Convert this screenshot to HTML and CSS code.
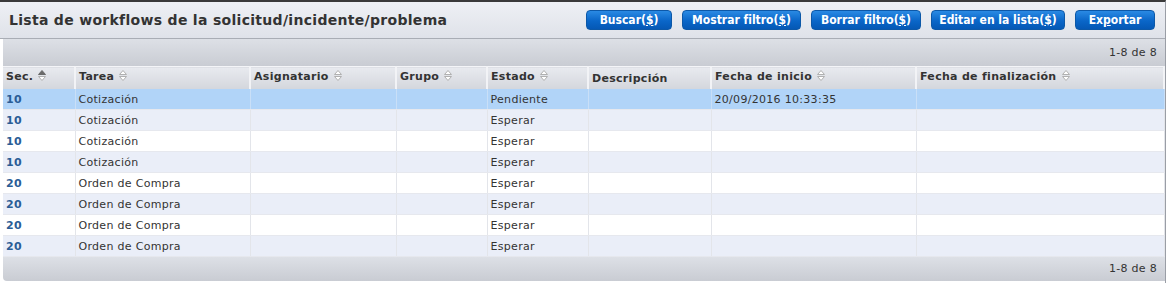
FILE: index.html
```html
<!DOCTYPE html>
<html lang="es">
<head>
    <meta charset="UTF-8">
    <title>Lista de workflows</title>
    <link rel="stylesheet" href="styles.css">
</head>
<body>
    <div class="panel">
        <div class="panel-head">
            <h1 class="title">Lista de workflows de la solicitud/incidente/problema</h1>
            <div class="actions">
                <button class="btn btn-search">Buscar(<u>$</u>)</button>
                <button class="btn btn-show">Mostrar filtro(<u>$</u>)</button>
                <button class="btn btn-clear">Borrar filtro(<u>$</u>)</button>
                <button class="btn btn-edit">Editar en la lista(<u>$</u>)</button>
                <button class="btn btn-export">Ex<u>p</u>ortar</button>
            </div>
        </div>

        <div class="pager">1-8 de 8</div>

        <table class="grid">
            <colgroup>
                <col class="c-seq">
                <col class="c-task">
                <col class="c-user">
                <col class="c-group">
                <col class="c-state">
                <col class="c-desc">
                <col class="c-start">
                <col>
            </colgroup>
            <thead>
                <tr>
                    <th>Sec. <svg class="sort" width="10" height="13" viewBox="0 0 10 13"><path d="M5 1.5 L8.5 5.5 L1.5 5.5 Z" fill="#6a6a6a" stroke="#6a6a6a"/><path d="M1.5 7.5 L8.5 7.5 L5 11.5 Z" fill="#fff" stroke="#b0b0b0"/></svg></th>
                    <th>Tarea <svg class="sort" width="10" height="13" viewBox="0 0 10 13"><path d="M5 1.5 L8.5 5.5 L1.5 5.5 Z" fill="#fff" stroke="#b0b0b0"/><path d="M1.5 7.5 L8.5 7.5 L5 11.5 Z" fill="#fff" stroke="#b0b0b0"/></svg></th>
                    <th>Asignatario <svg class="sort" width="10" height="13" viewBox="0 0 10 13"><path d="M5 1.5 L8.5 5.5 L1.5 5.5 Z" fill="#fff" stroke="#b0b0b0"/><path d="M1.5 7.5 L8.5 7.5 L5 11.5 Z" fill="#fff" stroke="#b0b0b0"/></svg></th>
                    <th>Grupo <svg class="sort" width="10" height="13" viewBox="0 0 10 13"><path d="M5 1.5 L8.5 5.5 L1.5 5.5 Z" fill="#fff" stroke="#b0b0b0"/><path d="M1.5 7.5 L8.5 7.5 L5 11.5 Z" fill="#fff" stroke="#b0b0b0"/></svg></th>
                    <th>Estado <svg class="sort" width="10" height="13" viewBox="0 0 10 13"><path d="M5 1.5 L8.5 5.5 L1.5 5.5 Z" fill="#fff" stroke="#b0b0b0"/><path d="M1.5 7.5 L8.5 7.5 L5 11.5 Z" fill="#fff" stroke="#b0b0b0"/></svg></th>
                    <th class="low">Descripción</th>
                    <th>Fecha de inicio <svg class="sort" width="10" height="13" viewBox="0 0 10 13"><path d="M5 1.5 L8.5 5.5 L1.5 5.5 Z" fill="#fff" stroke="#b0b0b0"/><path d="M1.5 7.5 L8.5 7.5 L5 11.5 Z" fill="#fff" stroke="#b0b0b0"/></svg></th>
                    <th>Fecha de finalización <svg class="sort" width="10" height="13" viewBox="0 0 10 13"><path d="M5 1.5 L8.5 5.5 L1.5 5.5 Z" fill="#fff" stroke="#b0b0b0"/><path d="M1.5 7.5 L8.5 7.5 L5 11.5 Z" fill="#fff" stroke="#b0b0b0"/></svg></th>
                </tr>
            </thead>
            <tbody>
                <tr class="selected"><td class="seq">10</td><td>Cotización</td><td></td><td></td><td>Pendiente</td><td></td><td>20/09/2016 10:33:35</td><td></td></tr>
                <tr class="alt"><td class="seq">10</td><td>Cotización</td><td></td><td></td><td>Esperar</td><td></td><td></td><td></td></tr>
                <tr><td class="seq">10</td><td>Cotización</td><td></td><td></td><td>Esperar</td><td></td><td></td><td></td></tr>
                <tr class="alt"><td class="seq">10</td><td>Cotización</td><td></td><td></td><td>Esperar</td><td></td><td></td><td></td></tr>
                <tr><td class="seq">20</td><td>Orden de Compra</td><td></td><td></td><td>Esperar</td><td></td><td></td><td></td></tr>
                <tr class="alt"><td class="seq">20</td><td>Orden de Compra</td><td></td><td></td><td>Esperar</td><td></td><td></td><td></td></tr>
                <tr><td class="seq">20</td><td>Orden de Compra</td><td></td><td></td><td>Esperar</td><td></td><td></td><td></td></tr>
                <tr class="alt"><td class="seq">20</td><td>Orden de Compra</td><td></td><td></td><td>Esperar</td><td></td><td></td><td></td></tr>
            </tbody>
        </table>

        <div class="pager pager-bottom">1-8 de 8</div>
    </div>
</body>
</html>
```

FILE: styles.css
```css
/* General */
body {
    margin: 0;
    padding: 0;
    background-color: #ffffff;
    font-family: "DejaVu Sans", Verdana, sans-serif;
    font-size: 11px;
    color: #333;
}

.panel {
    width: 1166px;
    height: 283px;
    border-top: 2px solid #3a3a3a;
    border-right: 1px solid #9a9ea6;
    box-sizing: border-box;
}

/* Header */
.panel-head {
    display: flex;
    align-items: center;
    justify-content: space-between;
    height: 36px;
    padding: 0 9px;
    background: linear-gradient(#eef0f5, #dfe2e9);
    border-bottom: 1px solid #a9adb5;
}

.title {
    margin: 0;
    font-size: 14px;
    font-weight: bold;
    color: #333;
    letter-spacing: 0.3px;
}

.actions {
    display: flex;
    gap: 10px;
    padding-right: 1px;
}

.btn {
    height: 20px;
    padding: 0;
    border: 1px solid #0c58a8;
    border-radius: 4px;
    background: linear-gradient(#2a8ae4, #0a66c8 55%, #0558b5);
    color: #ffffff;
    font-family: "DejaVu Sans Condensed", "DejaVu Sans", sans-serif;
    font-size: 12px;
    font-weight: bold;
    line-height: 18px;
    white-space: nowrap;
    cursor: pointer;
}

.btn-search { width: 86px; }
.btn-show { width: 119px; }
.btn-clear { width: 110px; }
.btn-edit { width: 134px; }
.btn-export { width: 80px; }

/* Pager bars */
.pager {
    height: 27px;
    margin-left: 3px;
    padding-right: 8px;
    line-height: 27px;
    text-align: right;
    background: linear-gradient(#dde0e6, #c9ccd3);
    color: #333;
    letter-spacing: 0.3px;
}

.pager-bottom {
    height: 24px;
    line-height: 24px;
    border-bottom-left-radius: 4px;
}

/* Grid */
.grid {
    width: 1162px;
    margin-left: 3px;
    border-collapse: collapse;
    table-layout: fixed;
    border-top: 1px solid #f4f5f8;
    letter-spacing: 0.3px;
}

.c-seq { width: 72px; }
.c-task { width: 175px; }
.c-user { width: 146px; }
.c-group { width: 91px; }
.c-state { width: 101px; }
.c-desc { width: 123px; }
.c-start { width: 205px; }

.grid th {
    height: 22px;
    padding: 2px 3px 0;
    box-sizing: border-box;
    line-height: 14px;
    text-align: left;
    font-weight: bold;
    vertical-align: top;
    background: linear-gradient(#e8eaef, #d3d6dc);
    border-right: 2px solid #f2f3f6;
    color: #333;
    white-space: nowrap;
}

.grid th.low {
    padding-top: 5px;
}

.sort {
    vertical-align: -2px;
}

.grid td {
    height: 21px;
    padding: 1px 3px 0;
    box-sizing: border-box;
    border-right: 1px solid #e3e5ea;
    border-bottom: 1px solid #e6e8ee;
    white-space: nowrap;
}

.grid tr.alt td {
    background-color: #eaeef8;
}

.grid tr.selected td {
    background-color: #b1d4f8;
    border-right-color: #c9dff7;
}

.seq {
    font-weight: bold;
    color: #2a5d96;
}
```
